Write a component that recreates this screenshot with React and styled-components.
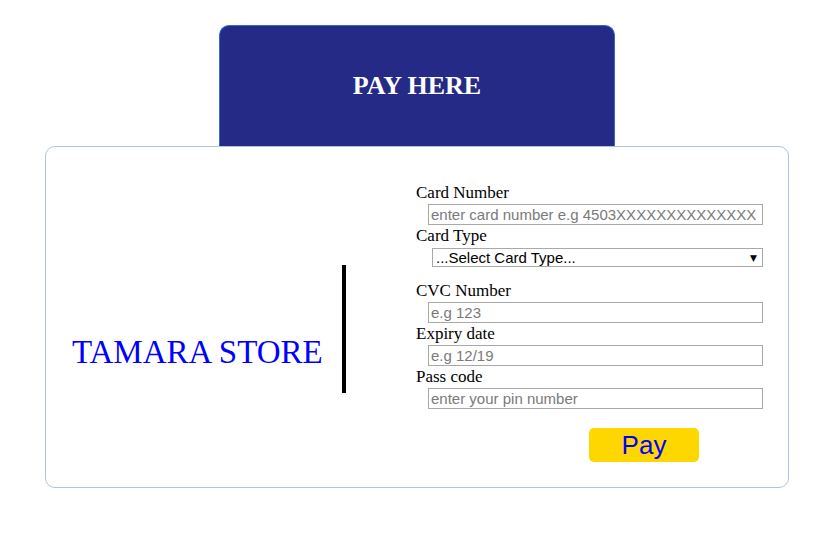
import React from "react";
import styled, { createGlobalStyle } from "styled-components";

const GlobalStyle = createGlobalStyle`
  body {
    margin: 0;
    background: #fff;
    font-family: "Liberation Serif", "Times New Roman", serif;
  }
`;

const fields = [
  { label: "Card Number", placeholder: "enter card number e.g 4503XXXXXXXXXXXXXX" },
  { label: "Card Type", select: true },
  { label: "CVC Number", placeholder: "e.g 123" },
  { label: "Expiry date", placeholder: "e.g 12/19" },
  { label: "Pass code", placeholder: "enter your pin number" },
];

const Page = styled.div`
  width: 744px;
  margin: 25px 0 0 45px;
  display: flex;
  flex-direction: column;
  align-items: center;
`;

const Header = styled.div`
  width: 396px;
  height: 121px;
  box-sizing: border-box;
  background: #252a86;
  border: 1px solid #2f6ad6;
  border-bottom: none;
  border-radius: 10px 10px 0 0;
  display: flex;
  align-items: center;
  justify-content: center;

  & h2 {
    margin: 0;
    color: #fff;
    font-size: 26px;
    font-weight: bold;
  }
`;

const Card = styled.div`
  width: 744px;
  height: 342px;
  box-sizing: border-box;
  border: 1px solid #b0c4de;
  border-radius: 10px;
  display: flex;
  align-items: flex-start;
`;

const Brand = styled.div`
  width: 296px;
  display: flex;
  align-items: flex-start;
`;

const StoreName = styled.h1`
  margin: 187px 0 0 26px;
  font-size: 33px;
  line-height: 36px;
  font-weight: normal;
  color: #0000ff;
  white-space: nowrap;
`;

const Divider = styled.div`
  width: 4px;
  height: 128px;
  margin-top: 118px;
  background: #000;
  flex-shrink: 0;
`;

const Form = styled.form`
  width: 347px;
  margin-left: 70px;
  padding-top: 37px;
  display: flex;
  flex-direction: column;
`;

const Field = styled.div`
  display: flex;
  flex-direction: column;
  margin-bottom: ${(p) => (p.$select ? "15px" : "2px")};
`;

const Label = styled.label`
  font-size: 17px;
  line-height: 18px;
  color: #000;
`;

const Input = styled.input`
  margin: 2px 0 0 12px;
  width: 335px;
  height: 21px;
  box-sizing: border-box;
  border: 1px solid #a9a9a9;
  padding: 0 2px;
  font: 15px "Liberation Sans", Arial, sans-serif;
  color: #000;
  outline: none;

  &::placeholder {
    color: #7a7a7a;
  }
`;

const SelectWrap = styled.div`
  position: relative;
  margin: 3px 0 0 16px;
  width: 331px;

  &::after {
    content: "▼";
    position: absolute;
    right: 6px;
    top: 5px;
    font: 9px "DejaVu Sans", sans-serif;
    color: #000;
    pointer-events: none;
  }
`;

const Select = styled.select`
  appearance: none;
  width: 100%;
  height: 19px;
  box-sizing: border-box;
  border: 1px solid #a9a9a9;
  border-radius: 0;
  background: #fff;
  padding: 0 0 0 3px;
  font: 15px/17px "Liberation Sans", Arial, sans-serif;
  color: #000;
  outline: none;
`;

const PayButton = styled.button`
  margin: 17px 0 0 173px;
  width: 110px;
  height: 34px;
  border: none;
  border-radius: 5px;
  background: #ffd700;
  color: #0000ff;
  font: 26px/34px "Liberation Sans", Arial, sans-serif;
  padding: 0;
`;

export default function App() {
  return (
    <>
      <GlobalStyle />
      <Page>
        <Header>
          <h2>PAY HERE</h2>
        </Header>
        <Card>
          <Brand>
            <StoreName>TAMARA STORE</StoreName>
          </Brand>
          <Divider />
          <Form onSubmit={(e) => e.preventDefault()}>
            {fields.map((f) => (
              <Field key={f.label} $select={f.select}>
                <Label>{f.label}</Label>
                {f.select ? (
                  <SelectWrap>
                    <Select defaultValue="">
                      <option value="">...Select Card Type...</option>
                      <option value="visa">Visa</option>
                      <option value="master">MasterCard</option>
                    </Select>
                  </SelectWrap>
                ) : (
                  <Input type="text" placeholder={f.placeholder} />
                )}
              </Field>
            ))}
            <PayButton type="submit">Pay</PayButton>
          </Form>
        </Card>
      </Page>
    </>
  );
}
